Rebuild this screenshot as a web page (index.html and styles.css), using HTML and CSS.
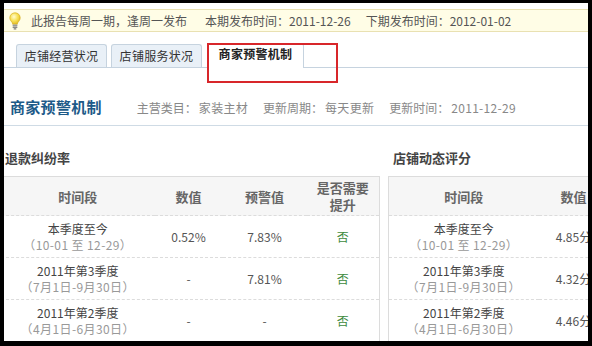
FILE: index.html
```html
<!DOCTYPE html>
<html>
<head>
<meta charset="utf-8">
<link rel="stylesheet" href="styles.css">
</head>
<body>
<div class="frame">
  <div class="notice">
    <svg class="bulb" width="12" height="18" viewBox="0 0 12 18">
      <defs>
        <radialGradient id="g" cx="0.4" cy="0.35" r="0.7">
          <stop offset="0" stop-color="#fffbd0"/>
          <stop offset="0.5" stop-color="#f8e25a"/>
          <stop offset="1" stop-color="#e0b81a"/>
        </radialGradient>
      </defs>
      <path d="M6 0.8C3 0.8 0.8 3 0.8 5.8c0 2 1.2 3.2 2 4.2.6.8.8 1.4.8 2.2h4.8c0-.8.2-1.4.8-2.2.8-1 2-2.2 2-4.2C11.2 3 9 .8 6 .8z" fill="url(#g)" stroke="#d4a812" stroke-width="0.6"/>
      <rect x="3.6" y="12.6" width="4.8" height="1.6" rx="0.5" fill="#9a9a9a"/>
      <rect x="3.6" y="14.5" width="4.8" height="1.6" rx="0.5" fill="#8a8a8a"/>
      <rect x="4.6" y="16.2" width="2.8" height="1.2" rx="0.5" fill="#777"/>
    </svg>
    <span class="n1">此报告每周一期，逢周一发布</span>
    <span class="n2">本期发布时间：2011-12-26</span>
    <span class="n3">下期发布时间：2012-01-02</span>
  </div>

  <div class="tabs">
    <div class="tab">店铺经营状况</div>
    <div class="tab">店铺服务状况</div>
    <div class="tab active">商家预警机制</div>
  </div>
  <div class="redbox"></div>

  <div class="title-row">
    <h1 class="title">商家预警机制</h1>
    <span class="meta k">主营类目：</span><span class="meta v">家装主材</span>
    <span class="meta k">更新周期：</span><span class="meta v">每天更新</span>
    <span class="meta k">更新时间：</span><span class="meta v">2011-12-29</span>
  </div>

  <div class="panels">
    <div class="panel left">
      <h2 class="ptitle">退款纠纷率</h2>
      <table class="grid">
        <colgroup><col class="c1"><col class="c2"><col class="c3"><col class="c4"></colgroup>
        <tr class="head"><th>时间段</th><th>数值</th><th>预警值</th><th><div>是否需要</div><div>提升</div></th></tr>
        <tr><td><div class="p">本季度至今</div><div class="s">（10-01 至 12-29）</div></td><td>0.52%</td><td>7.83%</td><td class="no">否</td></tr>
        <tr><td><div class="p">2011年第3季度</div><div class="s">（7月1日-9月30日）</div></td><td>-</td><td>7.81%</td><td class="no">否</td></tr>
        <tr class="last"><td><div class="p">2011年第2季度</div><div class="s">（4月1日-6月30日）</div></td><td>-</td><td>-</td><td class="no">否</td></tr>
      </table>
    </div>
    <div class="panel right">
      <h2 class="ptitle">店铺动态评分</h2>
      <table class="grid">
        <colgroup><col class="d1"><col class="d2"><col class="d3"></colgroup>
        <tr class="head"><th>时间段</th><th>数值</th><th>预警值</th></tr>
        <tr><td><div class="p">本季度至今</div><div class="s">（10-01 至 12-29）</div></td><td>4.85分</td><td>4.50分</td></tr>
        <tr><td><div class="p">2011年第3季度</div><div class="s">（7月1日-9月30日）</div></td><td>4.32分</td><td>4.50分</td></tr>
        <tr class="last"><td><div class="p">2011年第2季度</div><div class="s">（4月1日-6月30日）</div></td><td>4.46分</td><td>4.50分</td></tr>
      </table>
    </div>
  </div>
</div>
</body>
</html>
```

FILE: styles.css
```css
html, body {
  margin: 0;
  padding: 0;
  background: #000;
}
body {
  font-family: "Noto Sans CJK SC", "Noto Sans", sans-serif;
  font-size: 12px;
  color: #555;
}
.frame {
  position: relative;
  margin: 3px 0 0 4px;
  width: 584px;
  height: 338px;
  background: #fff;
  overflow: hidden;
}
.notice {
  margin-top: 6px;
  height: 21px;
  background: #fffde6;
  border-top: 1px solid #e9e1b2;
  border-bottom: 1px solid #e9e1b2;
  display: flex;
  align-items: center;
  line-height: 21px;
  color: #555;
}
.bulb {
  margin-left: 5px;
  margin-right: 10px;
  flex: none;
}
.n1 { margin-right: 18px; }
.n2 { margin-right: 15px; }

.tabs {
  margin-top: 12px;
  display: flex;
  align-items: flex-end;
  padding-left: 12px;
  border-bottom: 1px solid #c6d3df;
  height: 23px;
}
.tab {
  box-sizing: border-box;
  height: 23px;
  width: 91px;
  margin-right: 4px;
  border: 1px solid #c6d3df;
  border-bottom: none;
  border-radius: 3px 3px 0 0;
  background: #e9f0f7;
  text-align: center;
  line-height: 22px;
  color: #333;
  font-size: 12px;
  letter-spacing: 0.3px;
}
.tab.active {
  margin-left: 1px;
  width: 97px;
  height: 25px;
  margin-bottom: -1px;
  background: #fff;
  font-weight: bold;
  line-height: 20px;
  color: #222;
}
.redbox {
  position: absolute;
  left: 203px;
  top: 40px;
  width: 131px;
  height: 40px;
  box-sizing: border-box;
  border: 2px solid #d8262a;
}

.title-row {
  display: flex;
  align-items: baseline;
  padding: 29px 0 8px 6px;
  border-bottom: 1px solid #cfdbe5;
}
.title {
  margin: 0 35px 0 0;
  font-size: 15px;
  font-weight: bold;
  color: #1d5a88;
  line-height: 20px;
  letter-spacing: 0.3px;
}
.meta {
  color: #888;
  font-size: 12px;
}
.meta.k { margin-right: 2px; }
.meta.v { margin-right: 15px; letter-spacing: 0.3px; }

.panels {
  display: flex;
  margin-top: 23px;
  margin-left: -4px;
}
.panel { flex: none; }
.panel.left { width: 380px; margin-right: 8px; }
.panel.right { width: 300px; }
.ptitle {
  margin: 0 0 9px 5px;
  font-size: 13px;
  font-weight: bold;
  color: #444;
  line-height: 18px;
}
.grid {
  border-collapse: collapse;
  table-layout: fixed;
  border: 1px solid #dcdcdc;
}
.left .grid { width: 380px; }
.right .grid { width: 320px; }
.c1 { width: 154px; }
.c2 { width: 68px; }
.c3 { width: 84px; }
.c4 { width: 73px; }
.d1 { width: 150px; }
.d2 { width: 70px; }
.d3 { width: 100px; }
.grid th {
  background: #f6f6f6;
  height: 38px;
  padding: 0;
  font-size: 13px;
  font-weight: bold;
  color: #666;
  line-height: 17px;
  text-align: center;
}
.grid td {
  height: 41px;
  padding: 0;
  text-align: center;
  border-top: 1px dashed #dcdcdc;
  color: #555;
  font-size: 12px;
}
.grid .p {
  color: #444;
  line-height: 16px;
}
.grid .s {
  color: #999;
  line-height: 16px;
  letter-spacing: 0.4px;
}
.grid td.no {
  color: #3d8a3d;
}
```
